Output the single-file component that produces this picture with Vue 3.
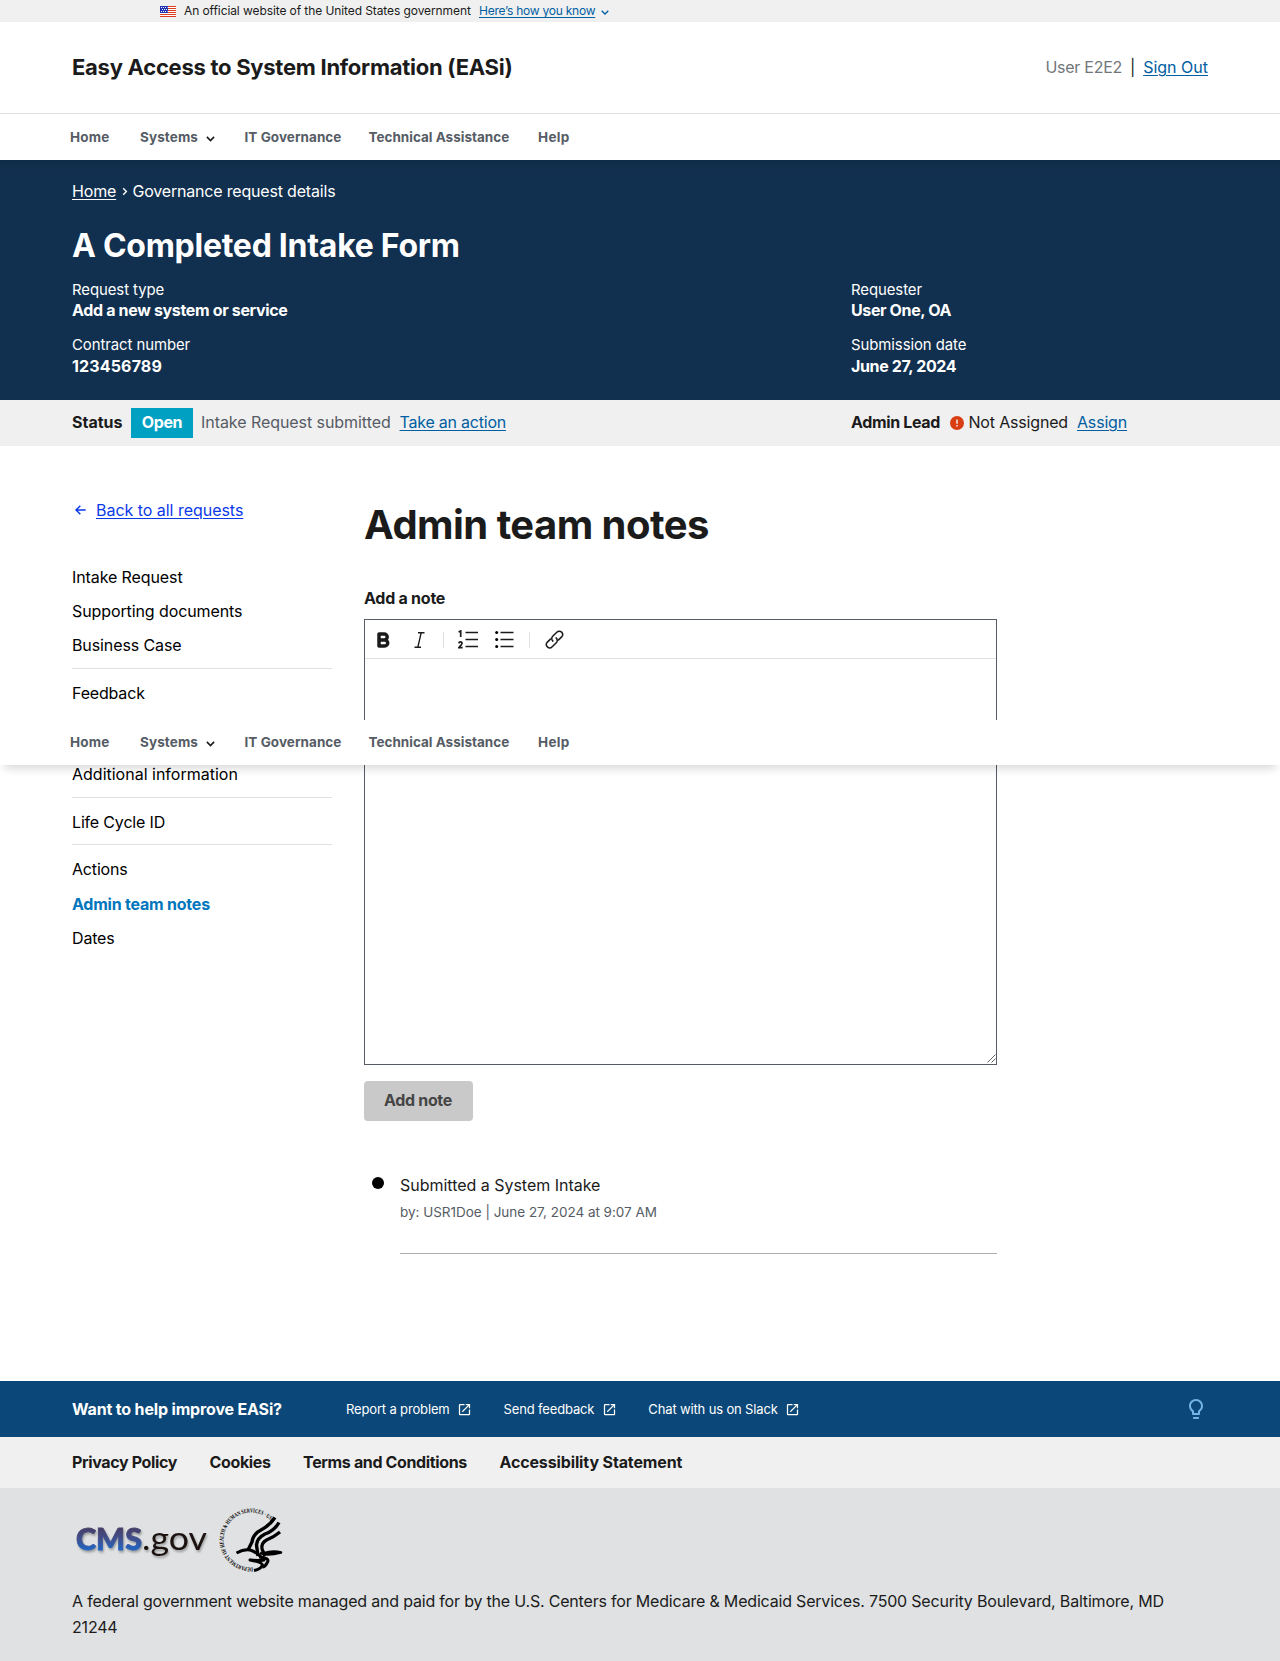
<script setup>
const navItems = [
  { label: 'Home', key: 'home' },
  { label: 'Systems', key: 'systems', menu: true },
  { label: 'IT Governance', key: 'governance' },
  { label: 'Technical Assistance', key: 'assistance' },
  { label: 'Help', key: 'help' },
]
const navBars = ['primary', 'sticky']

const sideGroups = [
  { key: 'forms', items: ['Intake Request', 'Supporting documents', 'Business Case'] },
  { key: 'feedback', items: ['Feedback'] },
  { key: 'extra', items: ['Additional information'] },
  { key: 'lcid', items: ['Life Cycle ID'] },
  { key: 'admin', items: ['Actions', 'Admin team notes', 'Dates'] },
]
const activeItem = 'Admin team notes'

const helpLinks = ['Report a problem', 'Send feedback', 'Chat with us on Slack']
const footerLinks = ['Privacy Policy', 'Cookies', 'Terms and Conditions', 'Accessibility Statement']
</script>

<template>
  <div class="page">
    <div class="banner">
      <svg class="flag" width="16" height="11" viewBox="0 0 16 11">
        <rect width="16" height="11" fill="#fff" />
        <path d="M0 .5h16M0 2.500h16M0 4.500h16M0 6.500h16M0 8.500h16M0 10.500h16" stroke="#db3e1f" stroke-width="1" />
        <rect width="8" height="7" fill="#1e33b1" />
        <path d="M1 1.500h6.500M2 3.500h5M1 5.500h6.500" stroke="#fff" stroke-width="1" stroke-dasharray="1 1" />
      </svg>
      <span class="banner-text">An official website of the United States government</span>
      <a class="banner-link">Here’s how you know</a>
      <svg class="banner-caret" width="8" height="5" viewBox="0 0 8 5"><path d="M.7.7 4 4 7.300.7" fill="none" stroke="#005ea2" stroke-width="1.300" /></svg>
    </div>

    <header class="header">
      <div class="title">Easy Access to System Information (EASi)</div>
      <div class="account">
        <span class="user">User E2E2</span>
        <span class="bar">|</span>
        <a class="signout">Sign Out</a>
      </div>
    </header>

    <nav v-for="bar in navBars" :key="bar" :class="['nav', bar]">
      <div v-for="item in navItems" :key="item.key" :class="['nav-item', item.key]">
        <span>{{ item.label }}</span>
        <svg v-if="item.menu" width="9" height="6" viewBox="0 0 9 6"><path d="M.9.9 4.500 4.500 8.100.9" fill="none" stroke="#1b1b1b" stroke-width="1.600" /></svg>
      </div>
    </nav>

    <section class="hero">
      <div class="crumbs">
        <a>Home</a>
        <svg width="6" height="9" viewBox="0 0 6 9"><path d="M1.200 1.200 4.400 4.500 1.200 7.800" fill="none" stroke="#fff" stroke-width="1.400" /></svg>
        <span class="crumb-current">Governance request details</span>
      </div>
      <h1>A Completed Intake Form</h1>
      <div class="facts">
        <dl>
          <dt>Request type</dt>
          <dd>Add a new system or service</dd>
          <dt>Contract number</dt>
          <dd class="digits">123456789</dd>
        </dl>
        <dl>
          <dt>Requester</dt>
          <dd class="tight">User One, OA</dd>
          <dt>Submission date</dt>
          <dd class="tight">June 27, 2024</dd>
        </dl>
      </div>
    </section>

    <section class="status">
      <div class="status-left">
        <strong class="status-label">Status</strong>
        <span class="tag">Open</span>
        <span class="state">Intake Request submitted</span>
        <a class="action">Take an action</a>
      </div>
      <div class="status-right">
        <strong class="lead">Admin Lead</strong>
        <svg class="alert" width="14" height="14" viewBox="0 0 14 14">
          <circle cx="7" cy="7" r="7" fill="#d83e12" />
          <path d="M7 3.400v4.300M7 9.100v1.500" stroke="#f0f0f0" stroke-width="1.500" />
        </svg>
        <span class="unassigned">Not Assigned</span>
        <a class="assign">Assign</a>
      </div>
    </section>

    <main class="main">
      <aside class="side">
        <a class="back">
          <svg width="11" height="10" viewBox="0 0 11 10"><path d="M10.700 5H1M5.300.7 1 5l4.300 4.300" fill="none" stroke="#0b39e8" stroke-width="1.500" /></svg>
          <span>Back to all requests</span>
        </a>
        <ul v-for="group in sideGroups" :key="group.key" :class="['group', group.key]">
          <li v-for="item in group.items" :key="item" :class="{ active: item === activeItem }">{{ item }}</li>
        </ul>
      </aside>

      <section class="notes">
        <h2>Admin team notes</h2>
        <label>Add a note</label>
        <div class="editor">
          <div class="toolbar">
            <svg class="t-bold" width="13" height="16" viewBox="0 0 13 16"><path d="M2 2h5.200a3 3 0 0 1 0 6H2zM2 8h5.700a3 3 0 0 1 0 6H2z" fill="none" stroke="#1b1b1b" stroke-width="3.500" stroke-linejoin="round" /></svg>
            <svg class="t-italic" width="11" height="16" viewBox="0 0 11 16"><path d="M4 .7h6.500M.5 15.300H7M7.200.7 3.800 15.300" fill="none" stroke="#1b1b1b" stroke-width="1.400" /></svg>
            <i class="sep" />
            <svg class="t-ol" width="20" height="19" viewBox="0 0 20 19">
              <path d="M.6 1.900 2.700.9V7M.8 13.300q.2-1.400 1.600-1.400 1.600 0 1.600 1.400 0 1-3.100 4.300h3.700" fill="none" stroke="#1b1b1b" stroke-width="1.700" />
              <path d="M7.500 2.500H20M7.500 9.500H20M7.500 16.500H20" stroke="#1b1b1b" stroke-width="1.400" />
            </svg>
            <svg class="t-ul" width="19" height="19" viewBox="0 0 19 19">
              <circle cx="1.700" cy="2.500" r="1.500" /><circle cx="1.700" cy="9.500" r="1.500" /><circle cx="1.700" cy="16.500" r="1.500" />
              <path d="M5.500 2.500H18.500M5.500 9.500H18.500M5.500 16.500H18.500" stroke="#1b1b1b" stroke-width="1.400" />
            </svg>
            <i class="sep" />
            <svg class="t-link" width="19" height="19" viewBox="0 0 19 19">
              <g fill="none" stroke="#1b1b1b" stroke-width="1.500" stroke-linecap="round" stroke-linejoin="round">
                <path d="M7.900 11.100c-1.500-1.400-1.500-3.500-.2-4.800l4.100-4.100c1.400-1.400 3.500-1.400 4.800-.1 1.300 1.300 1.300 3.400 0 4.800l-3 3" />
                <path d="M11.100 7.900c1.500 1.400 1.500 3.500.2 4.800l-4.100 4.100c-1.400 1.400-3.500 1.400-4.800.1-1.300-1.300-1.300-3.400 0-4.800l3-3" />
              </g>
            </svg>
          </div>
          <svg class="grip" width="9" height="9" viewBox="0 0 9 9"><path d="M.5 8.500l8-8M4.500 8.500l4-4" stroke="#555" stroke-width=".9" /></svg>
        </div>
        <button disabled>Add note</button>
        <div class="entry">
          <i class="dot" />
          <div class="entry-body">
            <p class="entry-title">Submitted a System Intake</p>
            <p class="entry-meta">by: USR1Doe | June 27, 2024 at 9:07 AM</p>
          </div>
        </div>
      </section>
    </main>

    <section class="improve">
      <strong>Want to help improve EASi?</strong>
      <a v-for="link in helpLinks" :key="link">
        <span>{{ link }}</span>
        <svg width="15" height="15" viewBox="0 0 24 24" fill="#fff"><path d="M19 19H5V5h7V3H5a2 2 0 0 0-2 2v14a2 2 0 0 0 2 2h14c1.100 0 2-.9 2-2v-7h-2v7zM14 3v2h3.590l-9.830 9.830 1.410 1.410L19 6.410V10h2V3h-7z" /></svg>
      </a>
      <svg class="bulb" width="24" height="24" viewBox="0 0 24 24" fill="#73b3e7"><path d="M9 21c0 .5.400 1 1 1h4c.6 0 1-.5 1-1v-1H9v1zm3-19C8.100 2 5 5.100 5 9c0 2.400 1.200 4.500 3 5.700V17c0 .5.400 1 1 1h6c.6 0 1-.5 1-1v-2.300c1.800-1.300 3-3.400 3-5.700 0-3.900-3.100-7-7-7zm2.900 11.100l-.9.600V16h-4v-2.300l-.9-.6A5 5 0 0 1 7 9c0-2.800 2.200-5 5-5s5 2.200 5 5c0 1.600-.8 3.200-2.100 4.100z" /></svg>
    </section>

    <section class="legal">
      <a v-for="link in footerLinks" :key="link">{{ link }}</a>
    </section>

    <footer class="footer">
      <div class="logos">
        <svg class="cms" width="140" height="60" viewBox="0 0 140 60">
          <defs>
            <linearGradient id="cmsFill" gradientUnits="userSpaceOnUse" x1="0" y1="20" x2="0" y2="44">
              <stop offset=".1" stop-color="#46406b" />
              <stop offset=".5" stop-color="#3f4f8e" />
              <stop offset=".9" stop-color="#2563bd" />
            </linearGradient>
          </defs>
          <text x="4" y="42.500" textLength="66" lengthAdjust="spacingAndGlyphs" font-size="31" font-weight="900" fill="url(#cmsFill)" stroke="url(#cmsFill)" stroke-width=".9">CMS</text>
          <text x="70" y="42.500" textLength="65" lengthAdjust="spacingAndGlyphs" font-size="33" fill="#1c1210">.gov</text>
        </svg>
        <svg class="hhs" width="68" height="66" viewBox="0 0 68 66">
          <defs><path id="hhsRing" d="M36 60.400A27.500 27.500 0 1 1 54.500 14.500" /></defs>
          <text font-size="6" font-weight="700"><textPath href="#hhsRing" textLength="112" lengthAdjust="spacingAndGlyphs">DEPARTMENT OF HEALTH &amp; HUMAN SERVICES · USA</textPath></text>
          <g fill="none" stroke="#000" stroke-linejoin="round">
            <path d="M58 10.500Q52 19 44 23 36 27 35 35L31 43" stroke-width="3.400" />
            <path d="M62 15.500Q57 24 48 27 40 31 39.500 38L41 49" stroke-width="3.400" />
            <path d="M63 25Q57 30 49.500 33 44 36 45 42L48 49" stroke-width="3.200" />
            <path d="M19.500 46Q27 42 33 43 40 45 47 53 42 54 33 53 45 55 45.500 58 44 62 37 63.500" stroke-width="3" />
            <path d="M43 46Q50 49 64 45.500 56 43 46 46.500" stroke-width="2.500" />
            <path d="M42 50Q54 51 50 56 48 60 45.500 60" stroke-width="3" />
          </g>
        </svg>
      </div>
      <p>A federal government website managed and paid for by the U.S. Centers for Medicare &amp; Medicaid Services. 7500 Security Boulevard, Baltimore, MD 21244</p>
    </footer>
  </div>
</template>

<style>
body {
  margin: 0;
}
</style>

<style scoped>
.page {
  position: relative;
  display: flex;
  flex-direction: column;
  width: 1280px;
  height: 1661px;
  overflow: hidden;
  background: #fff;
  color: #1b1b1b;
  font: 400 16px/20px Inter, "Liberation Sans", sans-serif;
  letter-spacing: -0.17px;
  white-space: nowrap;
}
.page * {
  box-sizing: border-box;
}
svg {
  display: block;
  flex: none;
}
h1, h2, p, ul, dl, dd {
  margin: 0;
  padding: 0;
}
a {
  color: #005ea2;
  text-decoration: underline;
  text-decoration-thickness: 1px;
  text-underline-offset: 2px;
}
strong, dd, label, button {
  font-weight: 700;
  letter-spacing: -0.34px;
}

.banner {
  display: flex;
  align-items: center;
  height: 22px;
  padding-left: 160px;
  background: #f0f0f0;
  font-size: 12px;
  letter-spacing: -0.09px;
}
.banner-text {
  width: 295px;
  margin-left: 8px;
}
.banner-link {
  width: 122px;
  letter-spacing: -0.24px;
}
.banner-caret {
  margin-top: 2px;
}

.header {
  display: flex;
  align-items: center;
  justify-content: space-between;
  height: 92px;
  padding: 0 72px 2px;
  border-bottom: 1px solid #dfe1e2;
}
.title {
  font-size: 22px;
  font-weight: 700;
  letter-spacing: -0.27px;
}
.account {
  display: flex;
  gap: 8px;
}
.user {
  color: #71767a;
  letter-spacing: -0.26px;
}
.signout {
  letter-spacing: 0;
}

.nav {
  display: flex;
  align-items: center;
  height: 46px;
  padding-left: 70px;
  background: #fff;
  color: #565c65;
  font-size: 13.500px;
  font-weight: 700;
  letter-spacing: 0.05px;
}
.nav.sticky {
  position: absolute;
  top: 720px;
  left: 0;
  width: 1280px;
  height: 45px;
  padding-bottom: 1px;
  z-index: 2;
  box-shadow: 0 8px 8px -4px rgba(0, 0, 0, 0.14);
}
.nav-item {
  display: flex;
  align-items: center;
}
.home {
  width: 70px;
  letter-spacing: 0.2px;
}
.systems {
  width: 104.500px;
  gap: 8px;
  letter-spacing: 0.1px;
}
.systems svg {
  margin-top: 3px;
}
.governance {
  width: 124px;
}
.assistance {
  width: 169.500px;
  letter-spacing: 0;
}
.help {
  letter-spacing: 0.3px;
}

.hero {
  height: 240px;
  padding: 21px 72px 0;
  background: linear-gradient(rgba(0, 0, 0, 0.1), rgba(0, 0, 0, 0) 10px), #112f4e;
  color: #fff;
}
.crumbs {
  display: flex;
  align-items: center;
}
.crumbs a {
  color: #fff;
  width: 50px;
}
.crumb-current {
  margin-left: 4.500px;
  letter-spacing: -0.19px;
}
h1 {
  margin-top: 25px;
  font-size: 32px;
  line-height: 40px;
  letter-spacing: -0.27px;
}
.facts {
  display: flex;
  margin-top: 14px;
}
.facts dl {
  flex: none;
  width: 779px;
}
.facts dl + dl {
  width: 300px;
}
dt {
  font-size: 14.900px;
  line-height: 20px;
  letter-spacing: -0.06px;
}
dd {
  line-height: 21px;
  margin-bottom: 14px;
}
dd:last-child {
  line-height: 22px;
}
.digits {
  letter-spacing: 0.15px;
}
.tight {
  letter-spacing: -0.38px;
}

.status {
  display: flex;
  height: 46px;
  padding-left: 72px;
  background: #f0f0f0;
}
.status-left,
.status-right {
  display: flex;
  align-items: center;
}
.status-left {
  width: 779px;
}
.status-left > :not(.tag),
.status-right > :not(.alert) {
  padding-bottom: 2px;
}
.status-label {
  width: 59px;
  letter-spacing: 0;
}
.tag {
  width: 62px;
  height: 30px;
  line-height: 28px;
  margin-right: 8px;
  background: #00a0c2;
  color: #fff;
  font-weight: 700;
  letter-spacing: -0.4px;
  text-align: center;
}
.state {
  width: 198.500px;
  color: #565c65;
  letter-spacing: -0.06px;
}
.action {
  letter-spacing: -0.22px;
}
.lead {
  width: 99px;
}
.unassigned {
  width: 108.500px;
  margin-left: 4.500px;
  letter-spacing: -0.18px;
}

.main {
  display: flex;
  height: 935px;
  padding-left: 72px;
}
.side {
  width: 260px;
  margin-right: 32px;
  padding-top: 54px;
  color: #000;
}
.back {
  display: flex;
  align-items: center;
  gap: 10px;
  height: 20px;
  margin-bottom: 40px;
  padding-left: 3px;
  color: #0b39e8;
  letter-spacing: -0.03px;
}
.group {
  list-style: none;
  margin-bottom: 7px;
}
.group li {
  height: 34px;
  line-height: 34px;
}
.forms,
.extra,
.lcid {
  border-bottom: 1px solid #dfe1e2;
}
.forms {
  height: 109px;
  letter-spacing: -0.1px;
}
.feedback {
  height: 74px;
}
.extra {
  height: 41px;
  letter-spacing: 0;
}
.lcid {
  height: 40px;
}
.admin li:first-child {
  height: 35px;
}
.group .active {
  color: #0076bd;
  font-weight: 700;
  letter-spacing: -0.22px;
}

.notes {
  width: 633px;
  padding-top: 53px;
}
h2 {
  font-size: 40px;
  line-height: 52px;
  letter-spacing: -0.54px;
}
label {
  display: block;
  margin: 37px 0 11px;
  letter-spacing: -0.25px;
}
.editor {
  position: relative;
  height: 446px;
  border: 1px solid #565c65;
}
.toolbar {
  display: flex;
  align-items: center;
  height: 39px;
  padding-top: 1px;
  padding-left: 11.500px;
  border-bottom: 1px solid #dfe1e2;
}
.t-italic {
  margin-left: 24px;
}
.sep {
  width: 1px;
  height: 16px;
  margin: 0 14px 0 18.500px;
  background: #dfe1e2;
}
.t-ul {
  margin-left: 17px;
}
.t-ul + .sep {
  margin-left: 14.500px;
  margin-right: 15px;
}
.grip {
  position: absolute;
  right: 0;
  bottom: 1px;
}
button {
  display: block;
  width: 109px;
  height: 40px;
  margin-top: 16px;
  padding: 0 1px 2px 0;
  border: 0;
  border-radius: 4px;
  background: #c9c9c9;
  color: #454545;
  font-family: inherit;
  font-size: 16px;
}
.entry {
  display: flex;
  margin-top: 54px;
}
.dot {
  width: 12px;
  height: 12px;
  margin: 2px 16px 0 8px;
  border-radius: 50%;
  background: #000;
}
.entry-body {
  width: 597px;
  height: 79px;
  border-bottom: 1px solid #a9aeb1;
}
.entry-title {
  letter-spacing: -0.02px;
  line-height: 20px;
}
.entry-meta {
  margin-top: 7px;
  color: #565c65;
  font-size: 13.500px;
  letter-spacing: -0.02px;
}

.improve {
  display: flex;
  align-items: center;
  height: 56px;
  padding: 0 72px;
  background: #0b4778;
  color: #fff;
}
.improve strong {
  width: 274px;
  letter-spacing: -0.16px;
}
.improve a {
  display: flex;
  align-items: center;
  gap: 7.500px;
  margin-right: 31.500px;
  color: #fff;
  font-size: 13px;
  letter-spacing: -0.15px;
  text-decoration: none;
}
.bulb {
  margin-left: auto;
}

.legal {
  display: flex;
  align-items: center;
  gap: 32.500px;
  height: 51px;
  padding-left: 72px;
  padding-bottom: 1px;
  background: #f0f0f0;
}
.legal a {
  color: #1b1b1b;
  font-weight: 700;
  letter-spacing: -0.36px;
  text-decoration: none;
}
.legal a:last-child {
  letter-spacing: -0.13px;
}

.footer {
  flex: 1;
  padding: 19px 72px 0;
  background: #dfe1e2;
}
.logos {
  display: flex;
}
.cms {
  font-family: Lato, sans-serif;
  letter-spacing: 0;
  filter: drop-shadow(1px 2px 1px rgba(0, 0, 0, 0.3));
}
.hhs {
  margin-left: 5px;
  font-family: "Liberation Serif", serif;
  letter-spacing: 0;
}
.footer p {
  margin-top: 16px;
  line-height: 25.600px;
  letter-spacing: -0.19px;
  white-space: normal;
}
</style>
